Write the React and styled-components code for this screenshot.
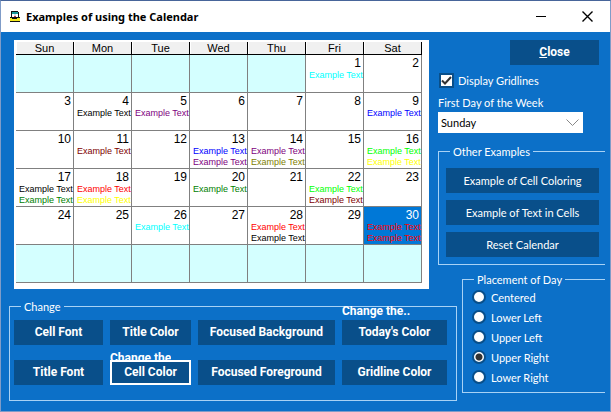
import React, { useState } from "react";
import styled, { createGlobalStyle, css } from "styled-components";

const Global = createGlobalStyle`
  *, *::before, *::after { box-sizing: border-box; }
  body {
    margin: 0;
    background: #0c70c8;
    color: #fff;
    font: 11px/15px Lato, sans-serif;
  }
  button, select { font: inherit; color: inherit; }
`;

const Window = styled.div`
  min-height: 100vh;
  display: flex;
  flex-direction: column;
  border: 1px solid #7f9cc8;
  border-top-color: #47659a;
`;

const TitleBar = styled.header`
  display: flex;
  align-items: center;
  height: 31px;
  padding-left: 8px;
  background: #fff;
  color: #000;
`;

const Title = styled.h1`
  flex: 1;
  margin: 0 0 0 5px;
  font: 700 11px/16px "Noto Sans", sans-serif;
`;

const CaptionButton = styled.button`
  display: grid;
  place-items: center;
  width: 46px;
  height: 31px;
  padding: 0;
  border: 0;
  background: none;
`;

const Body = styled.main`
  flex: 1;
  display: grid;
  grid-template-columns: minmax(0, 1fr) 19px 5px 143px;
  grid-template-rows: auto 27px auto;
  align-content: start;
  padding: 8px 5px 8px 8px;
`;

const CalendarPanel = styled.section`
  grid-column: 1;
  grid-row: 1 / 3;
  align-self: start;
  margin: 0 9px 0 5px;
  padding: 2px 7px 6px 2px;
  background: #fff;
  color: #000;
`;

const Calendar = styled.table`
  width: 100%;
  table-layout: fixed;
  border-spacing: 0;
`;

const DayName = styled.th`
  height: 13px;
  padding: 0;
  border-right: 1px solid #000;
  border-bottom: 1px solid #000;
  box-shadow: inset 1px 0 #fff;
  background: #f0f0f0;
  font: 400 11px/12px "Liberation Sans", sans-serif;
`;

const DayCell = styled.td`
  height: 38px;
  padding: 1px 0 0;
  border-right: 1px solid #808080;
  border-bottom: 1px solid #808080;
  vertical-align: top;
  background: #fff;
  ${(p) => p.$empty && css`background: #d4ffff;`}
  ${(p) => p.$today && css`background: #0078d7; color: #fff;`}
`;

const DayNumber = styled.div`
  padding-right: 2px;
  text-align: right;
  font: 12px/14px "Liberation Sans", sans-serif;
`;

const Entry = styled.div`
  padding-left: 3px;
  white-space: nowrap;
  font: 9px/11px "Liberation Sans", sans-serif;
  color: ${(p) => p.$color};
`;

const Options = styled.section`
  grid-column: 2 / 5;
  grid-row: 1;
  display: flex;
  flex-direction: column;
  padding-bottom: 7px;
`;

const PushButton = styled.button`
  height: 25px;
  padding: 0;
  border: 0;
  background: #094f8a;
  color: #fff;
  white-space: nowrap;
  ${(p) => p.$bold && css`font: 700 12px/15px Roboto, sans-serif;`}
  ${(p) => p.$focused && css`border: 2px solid #fff;`}
`;

const CloseButton = styled(PushButton)`
  align-self: flex-end;
  width: 89px;
  margin-right: 6px;
`;

const CheckLabel = styled.label`
  display: flex;
  align-items: center;
  gap: 4px;
  margin: 8px 0 0 1px;
`;

const CheckMark = styled.span`
  display: grid;
  > * { grid-area: 1 / 1; }
  svg { pointer-events: none; }
`;

const CheckBox = styled.input`
  appearance: none;
  width: 15px;
  height: 15px;
  margin: 0;
  border: 2px solid #094f8a;
  background: #fff;
  &:not(:checked) + svg { visibility: hidden; }
`;

const FieldLabel = styled.label`
  margin-top: 6px;
  padding-bottom: 1px;
  line-height: 17px;
`;

const SelectBox = styled.div`
  display: grid;
  align-items: center;
  width: 145px;
  color: #000;
  > * { grid-area: 1 / 1; }
  svg { justify-self: end; margin-right: 4px; pointer-events: none; }
`;

const Select = styled.select`
  appearance: none;
  height: 21px;
  padding: 0 20px 0 3px;
  border: 0;
  border-radius: 0;
  background: #fff;
`;

const Group = styled.fieldset`
  min-width: 0;
  margin: 0;
  border: 1px solid #a8d2f5;
`;

const Legend = styled.legend`
  margin-left: ${(p) => p.$indent}px;
  padding: 0 3px;
  line-height: 15px;
`;

const ExamplesGroup = styled(Group)`
  display: flex;
  flex-direction: column;
  gap: 7px;
  margin-top: 11px;
  padding: 9px 6px 7px 7px;
  border-right: 0;
`;

const PlacementGroup = styled(Group)`
  grid-column: 4;
  grid-row: 2 / 4;
  align-self: start;
  display: flex;
  flex-direction: column;
  padding: 0 0 5px 9px;
  border-right: 0;
`;

const RadioLabel = styled.label`
  display: flex;
  align-items: center;
  gap: 5px;
  height: 20px;
`;

const Radio = styled.input`
  appearance: none;
  width: 14px;
  height: 14px;
  margin: 0;
  border: 2px solid #094f8a;
  border-radius: 50%;
  background: #fff;
  &:checked { background: radial-gradient(circle, #333 3px, #fff 4px); }
`;

const ChangeGroup = styled(Group)`
  grid-column: 1 / 3;
  grid-row: 3;
  align-self: start;
  padding: 6px 9px 15px 4px;
`;

const ChangeGrid = styled.div`
  display: grid;
  grid-template-columns: 89fr 81fr 137fr 105fr;
  gap: 15px 7px;
`;

const ButtonSlot = styled.div`
  position: relative;
  display: grid;
`;

const Hint = styled.span`
  position: absolute;
  left: 0;
  bottom: 100%;
  display: flex;
  align-items: ${(p) => (p.$cut === "top" ? "flex-end" : "flex-start")};
  height: ${(p) => (p.$cut === "top" ? 14 : 9)}px;
  padding-bottom: ${(p) => (p.$cut === "top" ? 1 : 0)}px;
  overflow: hidden;
  white-space: nowrap;
  font: 700 12px/15px Roboto, sans-serif;
`;

const DAYS = ["Sun", "Mon", "Tue", "Wed", "Thu", "Fri", "Sat"];
const LEADING = 5;
const TODAY = 30;

const ENTRIES = {
  1: ["#00ffff"],
  4: ["#000000"],
  5: ["#800080"],
  9: ["#0000ff"],
  11: ["#800000"],
  13: ["#0000ff", "#800080"],
  14: ["#800080", "#808000"],
  16: ["#00ff00", "#ffff00"],
  17: ["#000000", "#008000"],
  18: ["#ff0000", "#ffff00"],
  20: ["#008000"],
  22: ["#00ff00", "#800000"],
  26: ["#00ffff"],
  28: ["#ff0000", "#000000"],
  30: ["#ff0000", "#ff0000"],
};

const WEEKS = Array.from({ length: 6 }, (_, w) =>
  Array.from({ length: 7 }, (_, d) => {
    const n = w * 7 + d - LEADING + 1;
    return n >= 1 && n <= 30 ? n : null;
  })
);

const CHANGES = [
  { text: "Cell Font" },
  { text: "Title Color" },
  { text: "Focused Background" },
  { text: "Today's Color", hint: "Change the..", cut: "top" },
  { text: "Title Font" },
  { text: "Cell Color", hint: "Change the", cut: "bottom", focused: true },
  { text: "Focused Foreground" },
  { text: "Gridline Color" },
];

const EXAMPLES = ["Example of Cell Coloring", "Example of Text in Cells", "Reset Calendar"];
const PLACEMENTS = ["Centered", "Lower Left", "Upper Left", "Upper Right", "Lower Right"];

function AppIcon() {
  return (
    <svg width="12" height="12" viewBox="0 0 12 12" shapeRendering="crispEdges" aria-hidden="true">
      <path fill="#111" d="M2 0h7v1h1v5h1v5H1V6h1z" />
      <path fill="#1a9a9a" d="M3 1h6v2H3z" />
      <path fill="#fff" d="M3 3h2v3H3zM7 3h2v3H7z" />
      <path fill="#c8dcec" d="M5 3h2v2H5z" />
      <path fill="#c33" d="M5 5h2v1H5z" />
      <path fill="#f4e81c" d="M1 7h2v1h5V7h3v3H1z" />
    </svg>
  );
}

export default function App() {
  const [grid, setGrid] = useState(true);
  const [placement, setPlacement] = useState("Upper Right");

  return (
    <Window>
      <Global />
      <TitleBar>
        <AppIcon />
        <Title>Examples of using the Calendar</Title>
        <CaptionButton type="button" aria-label="Minimize">
          <svg width="11" height="11" shapeRendering="crispEdges"><path d="M0 5.500h10" stroke="#000" /></svg>
        </CaptionButton>
        <CaptionButton type="button" aria-label="Close window">
          <svg width="11" height="11"><path d="M.5.5l10 10M10.500.5l-10 10" stroke="#000" strokeWidth="1.400" /></svg>
        </CaptionButton>
      </TitleBar>
      <Body>
        <CalendarPanel>
          <Calendar>
            <thead>
              <tr>{DAYS.map((d) => <DayName key={d} scope="col">{d}</DayName>)}</tr>
            </thead>
            <tbody>
              {WEEKS.map((week, w) => (
                <tr key={w}>
                  {week.map((n, d) => (
                    <DayCell key={d} $empty={n === null} $today={n === TODAY}>
                      {n !== null && <DayNumber>{n}</DayNumber>}
                      {(ENTRIES[n] || []).map((color, i) => (
                        <Entry key={i} $color={color}>Example Text</Entry>
                      ))}
                    </DayCell>
                  ))}
                </tr>
              ))}
            </tbody>
          </Calendar>
        </CalendarPanel>

        <Options>
          <CloseButton type="button" $bold><u>C</u>lose</CloseButton>
          <CheckLabel>
            <CheckMark>
              <CheckBox type="checkbox" checked={grid} onChange={(e) => setGrid(e.target.checked)} />
              <svg width="15" height="15" aria-hidden="true">
                <path d="M3 7.500l3 3 6-6.500" fill="none" stroke="#333" strokeWidth="2" />
              </svg>
            </CheckMark>
            Display Gridlines
          </CheckLabel>
          <FieldLabel htmlFor="first-day">First Day of the Week</FieldLabel>
          <SelectBox>
            <Select id="first-day" defaultValue="Sunday">
              <option>Sunday</option>
              <option>Monday</option>
            </Select>
            <svg width="13" height="7" aria-hidden="true">
              <path d="M.5.5l6 6 6-6" fill="none" stroke="#888" />
            </svg>
          </SelectBox>
          <ExamplesGroup>
            <Legend $indent={4}>Other Examples</Legend>
            {EXAMPLES.map((t) => <PushButton key={t} type="button">{t}</PushButton>)}
          </ExamplesGroup>
        </Options>

        <PlacementGroup>
          <Legend $indent={2}>Placement of Day</Legend>
          {PLACEMENTS.map((t) => (
            <RadioLabel key={t}>
              <Radio type="radio" name="placement" checked={placement === t} onChange={() => setPlacement(t)} />
              {t}
            </RadioLabel>
          ))}
        </PlacementGroup>

        <ChangeGroup>
          <Legend $indent={7}>Change</Legend>
          <ChangeGrid>
            {CHANGES.map(({ text, hint, cut, focused }) => (
              <ButtonSlot key={text}>
                {hint && <Hint $cut={cut}>{hint}</Hint>}
                <PushButton type="button" $bold $focused={focused}>{text}</PushButton>
              </ButtonSlot>
            ))}
          </ChangeGrid>
        </ChangeGroup>
      </Body>
    </Window>
  );
}
